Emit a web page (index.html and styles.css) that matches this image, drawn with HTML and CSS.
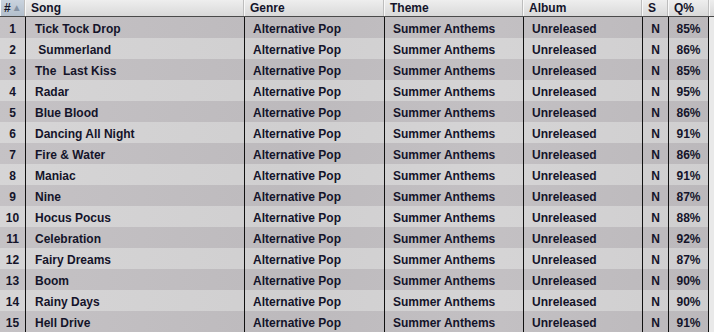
FILE: index.html
```html
<!DOCTYPE html>
<html lang="en">
<head>
  <meta charset="UTF-8">
  <title>Songs</title>
  <link rel="stylesheet" href="styles.css">
</head>
<body>

<div class="grid">
  <div class="row head">
    <div class="hcell sorted">#<span class="arrow">▲</span></div>
    <div class="hcell">Song</div>
    <div class="hcell">Genre</div>
    <div class="hcell">Theme</div>
    <div class="hcell">Album</div>
    <div class="hcell">S</div>
    <div class="hcell">Q%</div>
    <div class="hcell fill"></div>
  </div>

  <div class="row odd"><div class="c num">1</div><div class="c song">Tick Tock Drop</div><div class="c">Alternative Pop</div><div class="c">Summer Anthems</div><div class="c">Unreleased</div><div class="c mid">N</div><div class="c mid last">85%</div><div class="fill"></div></div>
  <div class="row even"><div class="c num">2</div><div class="c song">&nbsp;Summerland</div><div class="c">Alternative Pop</div><div class="c">Summer Anthems</div><div class="c">Unreleased</div><div class="c mid">N</div><div class="c mid last">86%</div><div class="fill"></div></div>
  <div class="row odd"><div class="c num">3</div><div class="c song">The &nbsp;Last Kiss</div><div class="c">Alternative Pop</div><div class="c">Summer Anthems</div><div class="c">Unreleased</div><div class="c mid">N</div><div class="c mid last">85%</div><div class="fill"></div></div>
  <div class="row even"><div class="c num">4</div><div class="c song">Radar</div><div class="c">Alternative Pop</div><div class="c">Summer Anthems</div><div class="c">Unreleased</div><div class="c mid">N</div><div class="c mid last">95%</div><div class="fill"></div></div>
  <div class="row odd"><div class="c num">5</div><div class="c song">Blue Blood</div><div class="c">Alternative Pop</div><div class="c">Summer Anthems</div><div class="c">Unreleased</div><div class="c mid">N</div><div class="c mid last">86%</div><div class="fill"></div></div>
  <div class="row even"><div class="c num">6</div><div class="c song">Dancing All Night</div><div class="c">Alternative Pop</div><div class="c">Summer Anthems</div><div class="c">Unreleased</div><div class="c mid">N</div><div class="c mid last">91%</div><div class="fill"></div></div>
  <div class="row odd"><div class="c num">7</div><div class="c song">Fire &amp; Water</div><div class="c">Alternative Pop</div><div class="c">Summer Anthems</div><div class="c">Unreleased</div><div class="c mid">N</div><div class="c mid last">86%</div><div class="fill"></div></div>
  <div class="row even"><div class="c num">8</div><div class="c song">Maniac</div><div class="c">Alternative Pop</div><div class="c">Summer Anthems</div><div class="c">Unreleased</div><div class="c mid">N</div><div class="c mid last">91%</div><div class="fill"></div></div>
  <div class="row odd"><div class="c num">9</div><div class="c song">Nine</div><div class="c">Alternative Pop</div><div class="c">Summer Anthems</div><div class="c">Unreleased</div><div class="c mid">N</div><div class="c mid last">87%</div><div class="fill"></div></div>
  <div class="row even"><div class="c num">10</div><div class="c song">Hocus Pocus</div><div class="c">Alternative Pop</div><div class="c">Summer Anthems</div><div class="c">Unreleased</div><div class="c mid">N</div><div class="c mid last">88%</div><div class="fill"></div></div>
  <div class="row odd"><div class="c num">11</div><div class="c song">Celebration</div><div class="c">Alternative Pop</div><div class="c">Summer Anthems</div><div class="c">Unreleased</div><div class="c mid">N</div><div class="c mid last">92%</div><div class="fill"></div></div>
  <div class="row even"><div class="c num">12</div><div class="c song">Fairy Dreams</div><div class="c">Alternative Pop</div><div class="c">Summer Anthems</div><div class="c">Unreleased</div><div class="c mid">N</div><div class="c mid last">87%</div><div class="fill"></div></div>
  <div class="row odd"><div class="c num">13</div><div class="c song">Boom</div><div class="c">Alternative Pop</div><div class="c">Summer Anthems</div><div class="c">Unreleased</div><div class="c mid">N</div><div class="c mid last">90%</div><div class="fill"></div></div>
  <div class="row even"><div class="c num">14</div><div class="c song">Rainy Days</div><div class="c">Alternative Pop</div><div class="c">Summer Anthems</div><div class="c">Unreleased</div><div class="c mid">N</div><div class="c mid last">90%</div><div class="fill"></div></div>
  <div class="row odd"><div class="c num">15</div><div class="c song">Hell Drive</div><div class="c">Alternative Pop</div><div class="c">Summer Anthems</div><div class="c">Unreleased</div><div class="c mid">N</div><div class="c mid last">91%</div><div class="fill"></div></div>
</div>

</body>
</html>
```

FILE: styles.css
```css
* {
  box-sizing: border-box;
}

body {
  margin: 0;
  font-family: "Liberation Sans", Arial, sans-serif;
  font-size: 12px;
  font-weight: bold;
  color: #14142a;
  background: #e9e9e9;
  overflow: hidden;
}

.grid {
  width: 714px;
}

.row {
  display: grid;
  grid-template-columns: 25px 219px 140px 139px 119px 26px 41px 1fr;
  height: 21px;
  line-height: 25px;
}

.head {
  height: 17px;
  line-height: 16px;
  border-bottom: 1px solid #4a4a4a;
  background: linear-gradient(#eeeeee, #d9d9d9);
}

.hcell {
  padding-left: 6px;
  border-right: 1px solid #bdbdbd;
  box-shadow: inset 1px 0 0 #f8f8f8;
  white-space: nowrap;
  overflow: hidden;
}

.hcell.sorted {
  padding-left: 4px;
  background: linear-gradient(#c9d3de, #b3bfcc);
}

.hcell.fill {
  border-right: none;
}

.arrow {
  font-size: 10px;
  color: #8592a3;
  vertical-align: 1px;
  margin-left: 1px;
}

.odd {
  background: linear-gradient(100deg, #c5c2c5, #bdbabd 40%, #c3c0c3 70%, #bbb8bb);
}

.even {
  background: linear-gradient(100deg, #d6d5d6, #d0cfd0 40%, #d5d4d5 70%, #cfcecf);
}

.c {
  padding-left: 8px;
  border-left: 1px solid #111;
  white-space: nowrap;
  overflow: hidden;
}

.c.song {
  padding-left: 9px;
}

.c.num {
  padding-left: 0;
  border-left: none;
  text-align: center;
}

.c.mid {
  padding-left: 0;
  text-align: center;
}

.c.last {
  border-right: 1px solid #111;
}

.row .fill {
  background: #e9e9e9;
}

.head .fill {
  background: none;
}
```
